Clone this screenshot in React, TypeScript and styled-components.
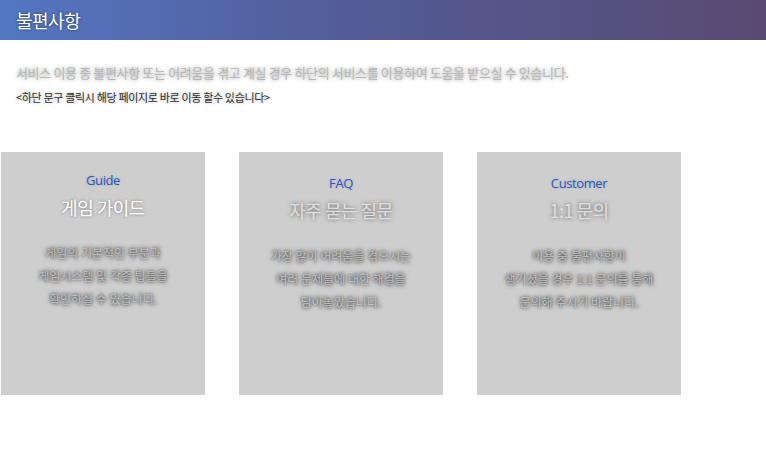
import React from "react";
import styled, { createGlobalStyle } from "styled-components";

const Global = createGlobalStyle`
  html, body { margin: 0; padding: 0; background: #fff; }
  body { font-family: "Noto Sans CJK KR", "Noto Sans", sans-serif; }
`;

const Page = styled.div`
  width: 766px;
  display: flex;
  flex-direction: column;
`;

const Header = styled.header`
  height: 40px;
  display: flex;
  align-items: center;
  padding-left: 16px;
  background: linear-gradient(90deg, #5377c2 0%, #535c98 45%, #594a72 100%);
`;

const HeaderTitle = styled.h1`
  margin: 0;
  font-size: 18px;
  font-weight: 400;
  color: #fff;
  letter-spacing: -0.5px;
  text-shadow: 0 0 3px rgba(0, 0, 0, 0.55);
`;

const Intro = styled.section`
  padding: 24px 0 0 16px;
  display: flex;
  flex-direction: column;
  gap: 6px;
`;

const IntroText = styled.p`
  margin: 0;
  font-size: 13px;
  line-height: 18px;
  color: #b8b8b8;
  letter-spacing: -0.35px;
  text-shadow: 0 0 4px rgba(0, 0, 0, 0.45);
`;

const IntroNote = styled.p`
  margin: 0;
  padding-top: 1px;
  font-size: 11px;
  line-height: 16px;
  color: #333;
  letter-spacing: -0.33px;
  text-shadow: 0 0 3px rgba(0, 0, 0, 0.35);
`;

const Cards = styled.div`
  display: flex;
  gap: 34px;
  padding: 47px 0 0 1px;
`;

const Card = styled.div<{ $lifted?: boolean }>`
  width: 204px;
  height: 243px;
  box-sizing: border-box;
  background: #cecece;
  padding-top: ${(p) => (p.$lifted ? 20 : 23)}px;
  display: flex;
  flex-direction: column;
  align-items: center;
  text-align: center;
`;

const Label = styled.div`
  font-family: "Open Sans", "Noto Sans", sans-serif;
  font-size: 13px;
  line-height: 16px;
  color: #2b58c6;
  letter-spacing: -0.4px;
  text-shadow: 0 0 3px rgba(0, 0, 0, 0.2);
`;

const Title = styled.div<{ $active?: boolean }>`
  margin-top: 7px;
  font-size: 18px;
  line-height: 24px;
  letter-spacing: -0.5px;
  color: ${(p) => (p.$active ? "#fff" : "#dedede")};
  text-shadow: ${(p) =>
    p.$active
      ? "0 0 3px rgba(0,0,0,0.45)"
      : "0 0 4px rgba(0,0,0,0.55)"};
`;

const Desc = styled.p`
  margin: 22px 0 0;
  font-size: 12px;
  line-height: 23px;
  letter-spacing: 0;
  color: #c0c0c0;
  text-shadow: 0 0 4px rgba(0, 0, 0, 0.85), 0 0 2px rgba(0, 0, 0, 0.35);
`;

const cards = [
  {
    label: "Guide",
    title: "게임 가이드",
    lines: ["게임의 기본적인 부분과", "게임시스템 및 각종 팁들을", "확인하실 수 있습니다."],
    active: true,
  },
  {
    label: "FAQ",
    title: "자주 묻는 질문",
    lines: ["가장 많이 어려움을 겪으시는", "여러 문제들에 대한 해결을", "담아놓았습니다."],
    active: false,
  },
  {
    label: "Customer",
    title: "1:1 문의",
    lines: ["이용 중 불편사항이", "생기셨을 경우 1:1 문의를 통해", "문의해 주시기 바랍니다."],
    active: false,
  },
];

export default function App() {
  return (
    <Page>
      <Global />
      <Header>
        <HeaderTitle>불편사항</HeaderTitle>
      </Header>
      <Intro>
        <IntroText>
          서비스 이용 중 불편사항 또는 어려움을 겪고 계실 경우 하단의 서비스를 이용하여 도움을 받으실 수 있습니다.
        </IntroText>
        <IntroNote>&lt;하단 문구 클릭시 해당 페이지로 바로 이동 할수 있습니다&gt;</IntroNote>
      </Intro>
      <Cards>
        {cards.map((c) => (
          <Card key={c.label} $lifted={c.active}>
            <Label>{c.label}</Label>
            <Title $active={c.active}>{c.title}</Title>
            <Desc>
              {c.lines.map((l, i) => (
                <React.Fragment key={i}>
                  {l}
                  {i < c.lines.length - 1 && <br />}
                </React.Fragment>
              ))}
            </Desc>
          </Card>
        ))}
      </Cards>
    </Page>
  );
}
